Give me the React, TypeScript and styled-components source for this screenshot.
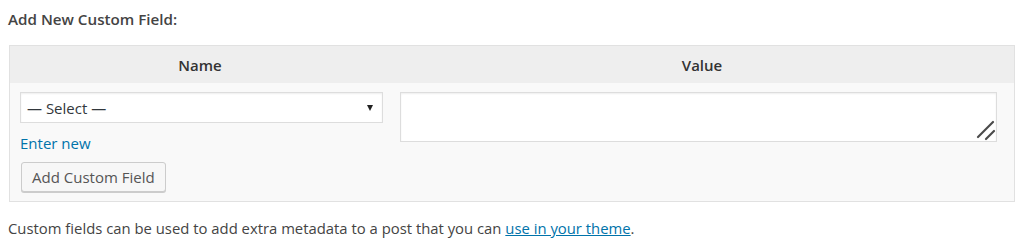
import React from "react";
import styled, { createGlobalStyle } from "styled-components";

const Global = createGlobalStyle`
  html, body { margin: 0; padding: 0; background: #fff; }
  body {
    font-family: "Open Sans", "Liberation Sans", sans-serif;
    font-size: 15px;
    color: #444;
  }
  * { box-sizing: border-box; }
`;

const Page = styled.div`
  padding: 9px 9px 0 8px;
  width: 1024px;
`;

const Title = styled.p`
  margin: 0 0 15px 0;
  font-weight: 600;
  font-size: 15.2px;
  line-height: 21px;
  color: #444;
`;

const Table = styled.div`
  margin-left: 1px;
  width: 1006px;
  border: 1px solid #e1e1e1;
  background: #f9f9f9;
`;

const HeadRow = styled.div`
  display: grid;
  grid-template-columns: 380px 1fr;
  background: #eeeeee;
  height: 37px;
`;

const HeadCell = styled.div`
  display: flex;
  align-items: center;
  justify-content: center;
  font-weight: 600;
  font-size: 15px;
  color: #333;
`;

const BodyRow = styled.div`
  display: grid;
  grid-template-columns: 380px 1fr;
  padding: 9px 0 9px 0;
`;

const LeftCell = styled.div`
  display: flex;
  flex-direction: column;
  align-items: flex-start;
  padding: 0 7px 0 10px;
`;

const RightCell = styled.div`
  padding: 0 17px 0 10px;
`;

const SelectWrap = styled.div`
  position: relative;
  width: 100%;
`;

const Select = styled.select`
  appearance: none;
  -webkit-appearance: none;
  width: 100%;
  height: 31px;
  border: 1px solid #ddd;
  border-radius: 0;
  box-shadow: inset 0 1px 2px rgba(0, 0, 0, 0.07);
  background: #fff;
  font-family: "Open Sans", "Liberation Sans", sans-serif;
  font-size: 15px;
  color: #32373c;
  padding: 0 24px 0 6px;
  outline: none;
`;

const Arrow = styled.span`
  position: absolute;
  right: 10px;
  top: 13px;
  width: 0;
  height: 0;
  border-left: 3.5px solid transparent;
  border-right: 3.5px solid transparent;
  border-top: 6px solid #222;
  pointer-events: none;
`;

const EnterNew = styled.a`
  margin-top: 10px;
  font-size: 15px;
  line-height: 21px;
  color: #0073aa;
  text-decoration: none;
`;

const Button = styled.button`
  margin-top: 8px;
  margin-left: 1px;
  height: 30px;
  padding: 0 10px 1px;
  border: 1px solid #ccc;
  border-radius: 3px;
  background: #f7f7f7;
  box-shadow: 0 1px 0 #ccc;
  font-family: "Open Sans", "Liberation Sans", sans-serif;
  font-size: 15px;
  color: #555;
  cursor: pointer;
`;

const TextWrap = styled.div`
  position: relative;
`;

const TextArea = styled.textarea`
  display: block;
  width: 100%;
  height: 50px;
  border: 1px solid #ddd;
  border-radius: 0;
  box-shadow: inset 0 1px 2px rgba(0, 0, 0, 0.07);
  background: #fff;
  font-family: "Open Sans", "Liberation Sans", sans-serif;
  font-size: 15px;
  resize: none;
  outline: none;
`;

const Resizer = styled.svg`
  position: absolute;
  right: 0;
  bottom: 0;
  width: 22px;
  height: 22px;
  pointer-events: none;
`;

const Note = styled.p`
  margin: 16px 0 0 0;
  font-size: 14.85px;
  line-height: 21px;
  color: #444;
`;

const Link = styled.a`
  color: #0073aa;
  text-decoration: underline;
`;

export default function App() {
  return (
    <Page>
      <Global />
      <Title>Add New Custom Field:</Title>
      <Table>
        <HeadRow>
          <HeadCell>Name</HeadCell>
          <HeadCell>Value</HeadCell>
        </HeadRow>
        <BodyRow>
          <LeftCell>
            <SelectWrap>
              <Select defaultValue="">
                <option value="">— Select —</option>
              </Select>
              <Arrow />
            </SelectWrap>
            <EnterNew href="#">Enter new</EnterNew>
            <Button type="button">Add Custom Field</Button>
          </LeftCell>
          <RightCell>
            <TextWrap>
              <TextArea />
              <Resizer viewBox="0 0 22 22">
                <line x1="3" y1="17" x2="18" y2="2" stroke="#4a4a4a" strokeWidth="2.2" strokeLinecap="round" />
                <line x1="11" y1="19" x2="19" y2="11" stroke="#4a4a4a" strokeWidth="2.2" strokeLinecap="round" />
              </Resizer>
            </TextWrap>
          </RightCell>
        </BodyRow>
      </Table>
      <Note>
        Custom fields can be used to add extra metadata to a post that you can{" "}
        <Link href="#">use in your theme</Link>.
      </Note>
    </Page>
  );
}
